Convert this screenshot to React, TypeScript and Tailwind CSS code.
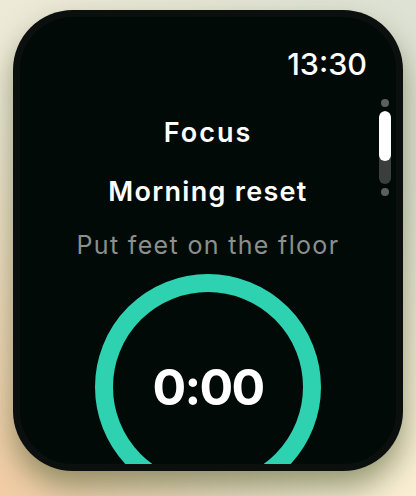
import React from "react";

export default function App() {
  return (
    <div
      className="w-[416px] h-[496px] overflow-hidden pt-[10px] px-[13px] bg-[radial-gradient(ellipse_at_0%_100%,#f2cca4_0%,rgba(242,204,164,0)_55%),radial-gradient(ellipse_at_100%_100%,#fbefd2_0%,rgba(251,239,210,0)_45%),linear-gradient(to_right,#eeead8,#dde2d4)]"
      style={{ fontFamily: "Inter, 'Noto Sans', sans-serif" }}
    >
      <div className="w-[390px] h-[461px] rounded-[60px] bg-[#0b0f0d] p-[7px] shadow-[0_16px_30px_rgba(85,95,50,0.6)]">
        <div className="relative w-[376px] h-[447px] rounded-[53px] bg-[#020a08] overflow-hidden flex flex-col items-center">
          <div className="w-full flex justify-end pr-[29px] pt-[29px]">
            <span className="text-[30.5px] leading-[36px] font-medium text-white">13:30</span>
          </div>
          <div className="mt-[35px] text-[27px] leading-[32px] font-semibold tracking-[2px] text-white">Focus</div>
          <div className="mt-[27px] text-[27px] leading-[32px] font-semibold tracking-[1.3px] text-white">Morning reset</div>
          <div className="mt-[22px] text-[25px] leading-[30px] tracking-[1.33px] text-[#8a908e]">Put feet on the floor</div>
          <div className="mt-[14px] shrink-0 w-[226px] h-[226px] rounded-full border-[18px] border-[#2ed2b0] flex items-center justify-center">
            <span className="text-[50px] leading-[60px] font-bold tracking-[-1.75px] text-white">0:00</span>
          </div>
          <div className="absolute right-[5px] top-[82px] flex flex-col items-center gap-[4px]">
            <div className="w-[8px] h-[8px] rounded-full bg-[#5b605e]" />
            <div className="w-[12px] h-[73px] rounded-full bg-[#3a3f3d] overflow-hidden">
              <div className="w-[12px] h-[50px] rounded-full bg-white" />
            </div>
            <div className="w-[8px] h-[8px] rounded-full bg-[#5b605e]" />
          </div>
        </div>
      </div>
    </div>
  );
}
